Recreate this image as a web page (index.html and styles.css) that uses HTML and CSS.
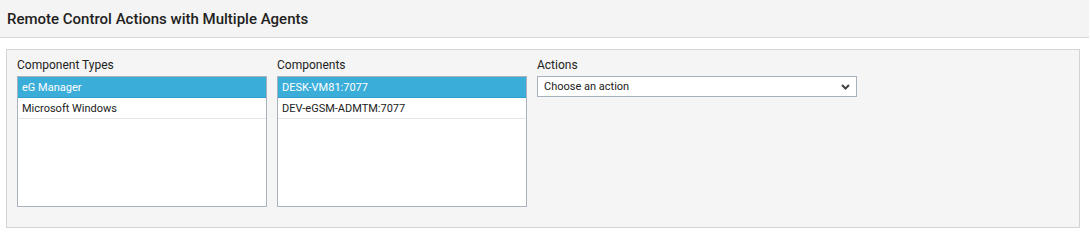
FILE: index.html
```html
<!DOCTYPE html>
<html lang="en">
<head>
    <meta charset="UTF-8">
    <title>Remote Control Actions with Multiple Agents</title>
    <link rel="stylesheet" href="styles.css">
</head>
<body>
    <div class="page-header">Remote Control Actions with Multiple Agents</div>

    <div class="panel">
        <div class="field">
            <label class="field-label">Component Types</label>
            <ul class="listbox">
                <li class="selected">eG Manager</li>
                <li>Microsoft Windows</li>
            </ul>
        </div>

        <div class="field">
            <label class="field-label">Components</label>
            <ul class="listbox">
                <li class="selected">DESK-VM81:7077</li>
                <li>DEV-eGSM-ADMTM:7077</li>
            </ul>
        </div>

        <div class="field">
            <label class="field-label">Actions</label>
            <div class="select-box">
                <span>Choose an action</span>
                <svg class="chevron" width="9" height="6" viewBox="0 0 9 6">
                    <path d="M1 1 L4.5 4.5 L8 1" fill="none" stroke="#444" stroke-width="2"/>
                </svg>
            </div>
        </div>
    </div>
</body>
</html>
```

FILE: styles.css
```css
* {
    margin: 0;
    padding: 0;
    box-sizing: border-box;
}

body {
    font-family: Roboto, "Liberation Sans", sans-serif;
    font-size: 12px;
    color: #222;
    background-color: #fff;
}

.page-header {
    height: 38px;
    padding: 0 7px;
    display: flex;
    align-items: center;
    background-color: #f4f4f4;
    border-bottom: 1px solid #d9d9d9;
    font-size: 15px;
    font-weight: 500;
    color: #222;
}

.panel {
    margin: 11px 9px 0 6px;
    height: 179px;
    padding: 7px 10px 0;
    display: flex;
    gap: 10px;
    background-color: #f5f5f5;
    border: 1px solid #d4d4d4;
}

.field {
    display: flex;
    flex-direction: column;
}

.field-label {
    font-size: 12px;
    line-height: 16px;
    margin-bottom: 3px;
    color: #222;
}

.listbox {
    list-style: none;
    width: 250px;
    height: 131px;
    background-color: #fff;
    border: 1px solid #a9b1bd;
}

.listbox li {
    height: 21px;
    line-height: 21px;
    padding-left: 4px;
    font-size: 11px;
    border-bottom: 1px solid #e6e6e6;
    color: #222;
}

.listbox li.selected {
    background-color: #3badd9;
    border-bottom-color: #2f9dcc;
    color: #fff;
}

.select-box {
    width: 320px;
    height: 21px;
    padding: 0 6px 0 6px;
    display: flex;
    align-items: center;
    justify-content: space-between;
    font-size: 11px;
    background-color: #fff;
    border: 1px solid #a9b1bd;
    color: #222;
}
```
